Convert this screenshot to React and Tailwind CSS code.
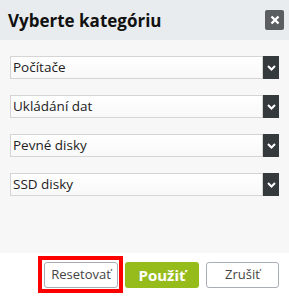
export default function App() {
  const categories = ['Počítače', 'Ukládání dat', 'Pevné disky', 'SSD disky']

  return (
    <div className="w-[289px] h-[296px] flex flex-col bg-white text-[#333] font-['Open_Sans',sans-serif]">
      <div className="h-[40px] bg-[#e9ecef] flex items-center justify-between pl-[8px] pr-[5px]">
        <h1 className="text-[17px] font-bold text-[#111] leading-none">Vyberte kategóriu</h1>
        <button className="w-[19px] h-[20px] bg-[#5b5e61] rounded-[2px] flex items-center justify-center">
          <svg width="10" height="10" viewBox="0 0 10 10">
            <path d="M1.5 1.5 L8.5 8.5 M8.5 1.5 L1.5 8.5" stroke="white" strokeWidth="2.4" />
          </svg>
        </button>
      </div>

      <div className="h-[213px] bg-[#f7f7f7] px-[10px] pt-[16px] flex flex-col gap-[16px]">
        {categories.map((c) => (
          <div key={c} className="h-[23px] flex">
            <div className="flex-1 border border-[#d5d5d5] bg-gradient-to-b from-white to-[#f8f8f8] flex items-center pl-[2px] text-[13.5px] text-[#222]">
              {c}
            </div>
            <div className="w-[16px] bg-[#353a3d] flex items-center justify-center">
              <svg width="9" height="6" viewBox="0 0 9 6">
                <path d="M1 1 L4.5 4.5 L8 1" stroke="white" strokeWidth="2" fill="none" />
              </svg>
            </div>
          </div>
        ))}
      </div>

      <div className="flex-1 flex justify-end items-start gap-[7px] pt-[9px] pr-[10px]">
        <button className="relative w-[74px] h-[26px] border border-[#a9aeb6] rounded-[3px] text-[13px] text-[#444] bg-white">
          Resetovať
          <span className="absolute -left-[7px] -right-[6px] -top-[7px] -bottom-[6px] border-4 border-[#ff0000]" />
        </button>
        <button className="w-[74px] h-[26px] rounded-[3px] bg-[#96bc1c] text-white font-bold text-[15px]">
          Použiť
        </button>
        <button className="w-[73px] h-[26px] border border-[#a9aeb6] rounded-[3px] text-[13px] text-[#444] bg-white">
          Zrušiť
        </button>
      </div>
    </div>
  )
}
